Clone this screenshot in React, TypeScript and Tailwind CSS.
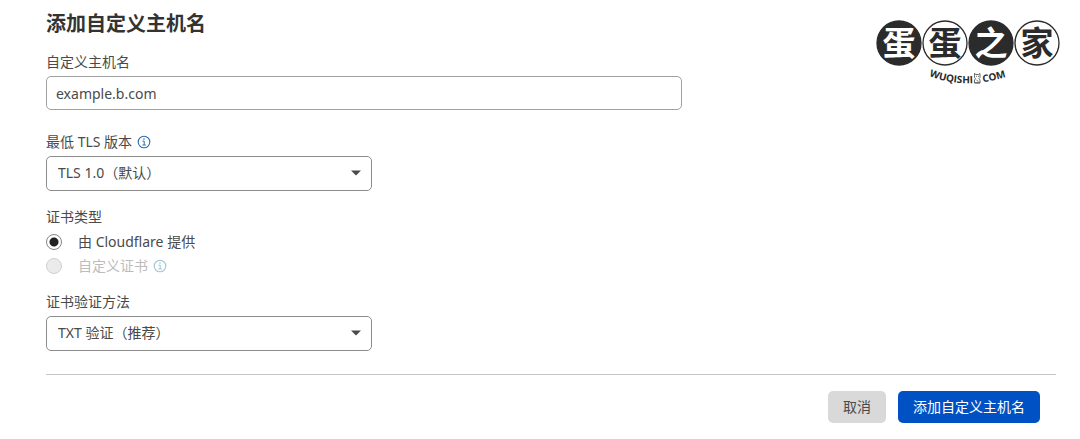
import { useState, type ReactNode } from "react";

function InfoIcon({ className }: { className: string }) {
  return (
    <svg viewBox="0 0 14 14" className={className} fill="none" stroke="currentColor" aria-hidden="true">
      <circle cx="7" cy="7" r="5.8" strokeWidth="1.1" />
      <path d="M5.5 6.1H7.2V10M5.4 10H8.8" strokeWidth="1" />
      <circle cx="7" cy="4" r="0.8" fill="currentColor" stroke="none" />
    </svg>
  );
}

const seals = [
  { char: "蛋", x: 23, dark: true },
  { char: "蛋", x: 69, dark: false },
  { char: "之", x: 115, dark: true },
  { char: "家", x: 161, dark: false },
];

function Logo() {
  return (
    <svg
      viewBox="0 -9 184 84"
      className="h-[84px] w-[184px] shrink-0"
      role="img"
      aria-label="蛋蛋之家 WUQISHI.COM"
    >
      {seals.map(({ char, x, dark }) => (
        <g key={x}>
          <circle cx={x} cy="24" r="22" fill={dark ? "#2b2b2b" : "#ffffff"} stroke="#2b2b2b" strokeWidth="1.3" />
          <text
            x={x}
            y="36"
            textAnchor="middle"
            fill={dark ? "#ffffff" : "#2b2b2b"}
            className="font-['Noto_Sans_CJK_SC',sans-serif] text-[33px] leading-none font-bold"
          >
            {char}
          </text>
        </g>
      ))}
      <path id="logo-arc" d="M53 57Q91 72 136 56" fill="none" />
      <g fill="#2b2b2b" className="font-['Open_Sans',sans-serif] text-[10px] leading-none font-bold">
        <text>
          <textPath href="#logo-arc" startOffset="0">WUQISHI</textPath>
        </text>
        <text>
          <textPath href="#logo-arc" startOffset="55">COM</textPath>
        </text>
      </g>
      <g fill="none" stroke="#444444" strokeWidth="0.8">
        <path d="M98.5 56.2V54.5L100 55.5H102.5L104 54.5V58.5L103 59.5L104 61V64H98.5V61L99.7 59.5L98.5 58.5Z" />
        <path d="M100 57.3H101M102 57.3H103M100.5 60.8L102.5 62.8M99 63.8H104" />
      </g>
    </svg>
  );
}

function SelectBox({ id, children }: { id: string; children: ReactNode }) {
  return (
    <div className="relative w-[326px] max-w-full">
      <select
        id={id}
        className="block h-[35px] w-full appearance-none rounded-[5px] border border-[#8c8c8c] bg-white pr-8 pb-0.5 pl-[11px] text-sm text-[#4a4a4a]"
      >
        {children}
      </select>
      <svg
        viewBox="0 0 10 6"
        className="pointer-events-none absolute top-[14px] right-[11px] h-[6px] w-[10px] fill-[#4a4a4a]"
        aria-hidden="true"
      >
        <path d="M0 0.5H10L5 5.5Z" />
      </svg>
    </div>
  );
}

const radioClass =
  "size-4 shrink-0 appearance-none rounded-full border border-[#858585] bg-white checked:bg-[radial-gradient(circle,#222222_0_4px,#ffffff_5px)] disabled:border-[#d0d0d0] disabled:bg-[#ebebeb]";

export default function App() {
  const [hostname, setHostname] = useState("example.b.com");

  return (
    <main className="bg-white pt-[10px] pr-6 pb-[15px] pl-[46px] font-['Noto_Sans','Noto_Sans_CJK_SC',sans-serif] text-sm leading-5 text-[#4a4a4a]">
      <form onSubmit={(e) => e.preventDefault()}>
        <div className="flex items-start justify-between">
          <div className="w-[636px]">
            <h1 className="text-xl leading-7 font-bold text-[#333333]">添加自定义主机名</h1>
            <label htmlFor="hostname" className="mt-[14px] block">
              自定义主机名
            </label>
            <input
              id="hostname"
              type="text"
              value={hostname}
              onChange={(e) => setHostname(e.target.value)}
              className="mt-1 block h-[34px] w-full rounded-[5px] border border-[#a0a0a0] bg-white px-[9px] text-sm text-[#4a4a4a]"
            />
          </div>
          <div className="-mr-1">
            <Logo />
          </div>
        </div>

        <div className="mt-[22px] flex items-center gap-[5px]">
          <label htmlFor="tls">最低 TLS 版本</label>
          <InfoIcon className="size-[14px] text-[#2b6cb0]" />
        </div>
        <div className="mt-1">
          <SelectBox id="tls">
            <option>TLS 1.0（默认）</option>
          </SelectBox>
        </div>

        <fieldset className="mt-4">
          <legend>证书类型</legend>
          <div className="mt-[5px] flex items-center gap-4">
            <input id="cert-cf" type="radio" name="cert" defaultChecked className={radioClass} />
            <label htmlFor="cert-cf">由 Cloudflare 提供</label>
          </div>
          <div className="mt-1 flex items-center gap-4">
            <input id="cert-custom" type="radio" name="cert" disabled className={radioClass} />
            <div className="flex items-center gap-[5px]">
              <label htmlFor="cert-custom" className="text-[#bcbcbc]">
                自定义证书
              </label>
              <InfoIcon className="size-[14px] text-[#9fc3d3]" />
            </div>
          </div>
        </fieldset>

        <label htmlFor="method" className="mt-4 block">
          证书验证方法
        </label>
        <div className="mt-1">
          <SelectBox id="method">
            <option>TXT 验证（推荐）</option>
          </SelectBox>
        </div>

        <hr className="mt-[23px] border-t border-[#c4c4c4]" />

        <div className="mt-4 flex justify-end gap-3 pr-4">
          <button type="button" className="h-8 rounded-[5px] bg-[#d9d9d9] px-[15px] text-[#4a4a4a]">
            取消
          </button>
          <button type="submit" className="h-8 rounded-[5px] bg-[#0051c3] px-[15px] text-white">
            添加自定义主机名
          </button>
        </div>
      </form>
    </main>
  );
}
